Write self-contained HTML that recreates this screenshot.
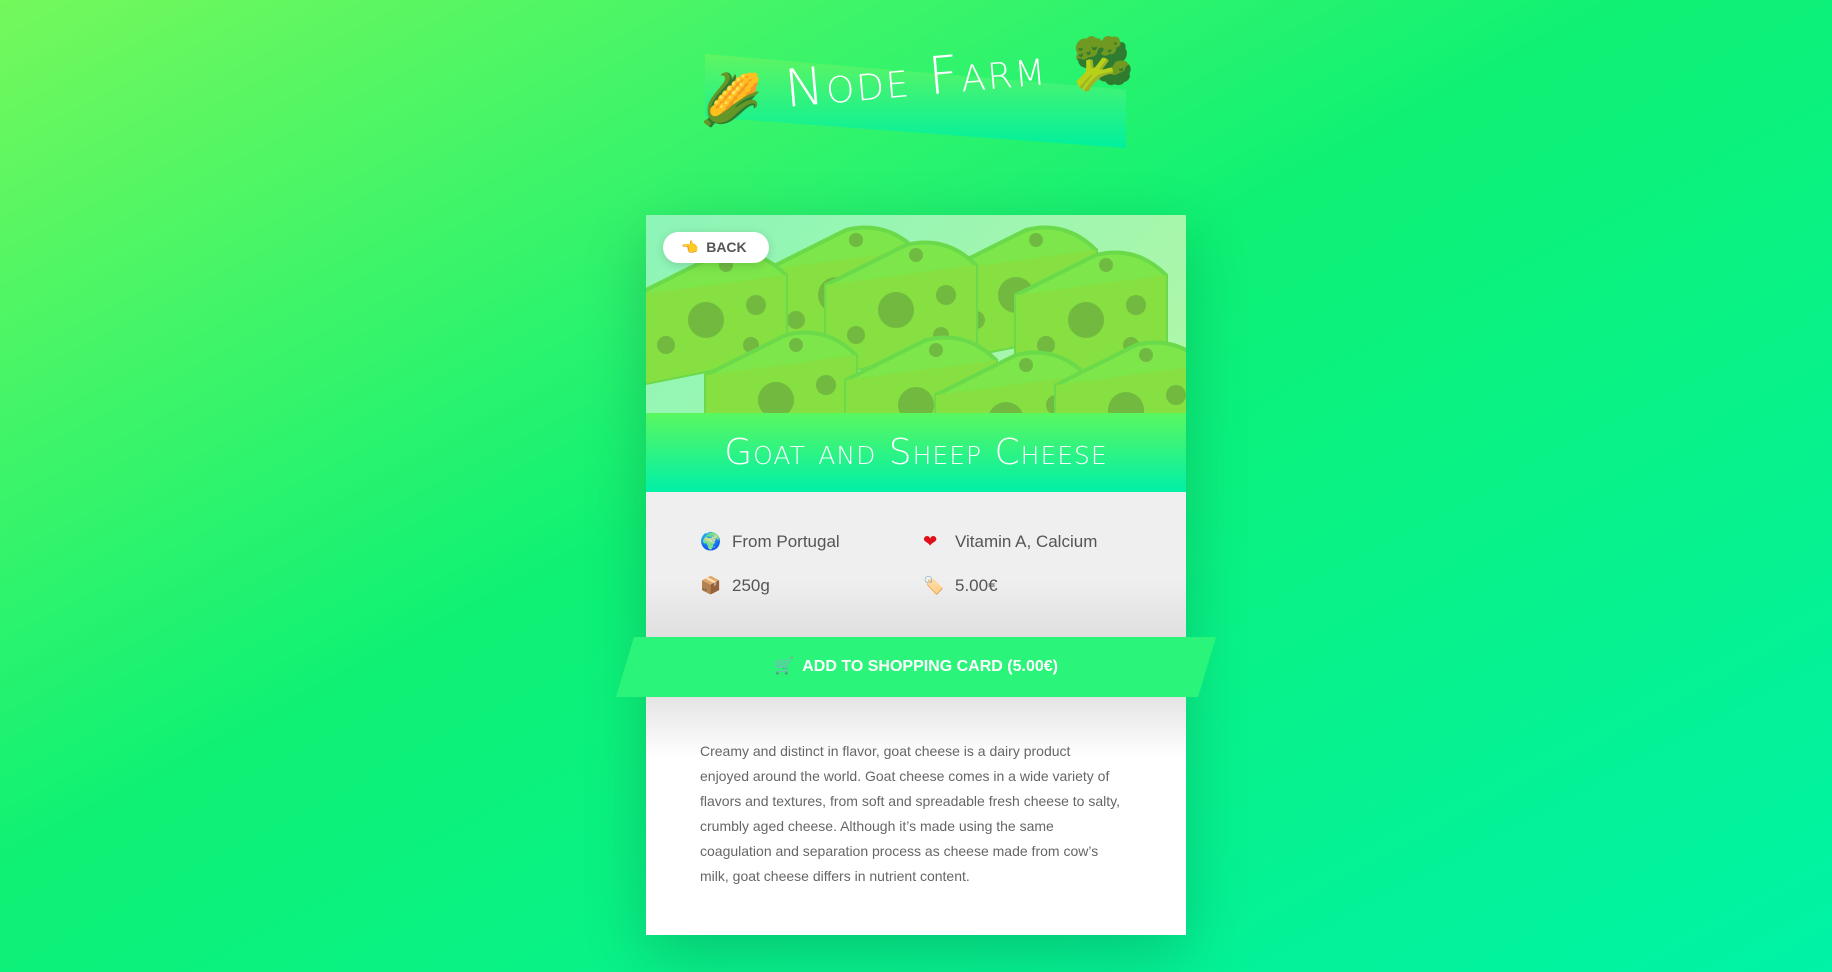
<!DOCTYPE html>
<html><head><meta charset="utf-8"><style>
*{margin:0;padding:0;box-sizing:border-box}
body{width:1832px;height:972px;overflow:hidden;background:linear-gradient(to bottom right,#74f85c 0%,#0ef174 45%,#00f3a6 100%);font-family:"Liberation Sans",sans-serif;position:relative}
.band{position:absolute;left:705px;top:54px;width:421px;height:94px;background:linear-gradient(#5ff561,#00f09e);clip-path:polygon(0 0,100% 38%,100% 100%,0 67%)}
.logo{position:absolute;left:785px;top:60px;font-size:52px;color:#fff;letter-spacing:2px;transform:rotate(-5deg);transform-origin:left center;font-family:"DejaVu Sans",sans-serif;font-weight:200;font-variant:small-caps}
.emo{position:absolute;font-size:50px;font-family:"Noto Color Emoji",sans-serif}
.card{position:absolute;left:646px;top:215px;width:540px;height:720px;background:#fff;box-shadow:0 20px 60px rgba(0,0,0,.18)}
.img{position:absolute;left:0;top:0;width:540px;height:198px;overflow:hidden;background:linear-gradient(135deg,#8cf5b8,#b0f7a8)}
.title{position:absolute;left:0;top:198px;width:540px;height:79px;background:linear-gradient(#5af760,#00f0a8);color:#fff;font-size:36px;text-align:center;line-height:79px;font-family:"DejaVu Sans",sans-serif;font-weight:200;font-variant:small-caps;letter-spacing:1px}
.info{position:absolute;left:0;top:277px;width:540px;height:145px;background:linear-gradient(#efefef 60%,#e0e0e0);}
.it{position:absolute;font-size:17px;color:#555;font-family:"Liberation Sans",sans-serif}
.it span{display:inline-block;width:32px}
.btn{position:absolute;left:-30px;top:422px;width:600px;height:60px;background:#2af57a;clip-path:polygon(3% 0,100% 0,97% 100%,0 100%);color:#fff;font-weight:bold;font-size:16px;text-align:center;line-height:60px}
.low{position:absolute;left:0;top:482px;width:540px;height:60px;background:linear-gradient(#e4e4e4,#fff)}
.desc{position:absolute;left:54px;top:524px;width:460px;font-size:14px;line-height:25px;color:#666;white-space:nowrap}
.back{position:absolute;left:17px;top:17px;width:106px;height:31px;background:#fff;border-radius:16px;font-size:14px;font-weight:bold;color:#555;line-height:31px;padding-left:18px;box-shadow:0 2px 10px rgba(0,0,0,.15)}
</style></head><body>
<div class="band"></div>
<div class="emo" style="left:700px;top:72px">🌽</div>
<div class="emo" style="left:1072px;top:36px">🥦</div>
<div class="logo">Node Farm</div>
<div class="card">
<div class="img">
<svg width="540" height="198" viewBox="0 0 540 198">
<defs><g id="c"><path d="M0 60 L80 20 Q120 10 150 40 L150 120 L0 150Z" fill="#7de64a" stroke="#6ad94a" stroke-width="4"/><path d="M0 60 L150 40 L150 120 L0 150Z" fill="#86e041"/><circle cx="70" cy="85" r="18" fill="#6aa83e" opacity=".7"/><circle cx="120" cy="70" r="10" fill="#6aa83e" opacity=".7"/><circle cx="30" cy="110" r="9" fill="#6aa83e" opacity=".7"/><circle cx="115" cy="110" r="8" fill="#6aa83e" opacity=".7"/><circle cx="90" cy="30" r="7" fill="#6aa83e" opacity=".7"/></g></defs>
<use href="#c" x="120" y="-5"/><use href="#c" x="300" y="-5"/><use href="#c" x="-10" y="20"/><use href="#c" x="180" y="10"/><use href="#c" x="370" y="20"/><use href="#c" x="60" y="100"/><use href="#c" x="200" y="105"/><use href="#c" x="290" y="120"/><use href="#c" x="410" y="110"/>
</svg>
<div class="back">👈&nbsp; BACK</div>
</div>
<div class="title">Goat and Sheep Cheese</div>
<div class="info">
<div class="it" style="left:54px;top:40px"><span>🌍</span>From Portugal</div>
<div class="it" style="left:277px;top:40px"><span style="color:#e0101a">❤</span>Vitamin A, Calcium</div>
<div class="it" style="left:54px;top:84px"><span>📦</span>250g</div>
<div class="it" style="left:277px;top:84px"><span>🏷️</span>5.00€</div>
</div>
<div class="low"></div>
<div class="btn">🛒&nbsp; ADD TO SHOPPING CARD (5.00€)</div>
<div class="desc">Creamy and distinct in flavor, goat cheese is a dairy product<br>enjoyed around the world. Goat cheese comes in a wide variety of<br>flavors and textures, from soft and spreadable fresh cheese to salty,<br>crumbly aged cheese. Although it’s made using the same<br>coagulation and separation process as cheese made from cow’s<br>milk, goat cheese differs in nutrient content.</div>
</div>
</body></html>
